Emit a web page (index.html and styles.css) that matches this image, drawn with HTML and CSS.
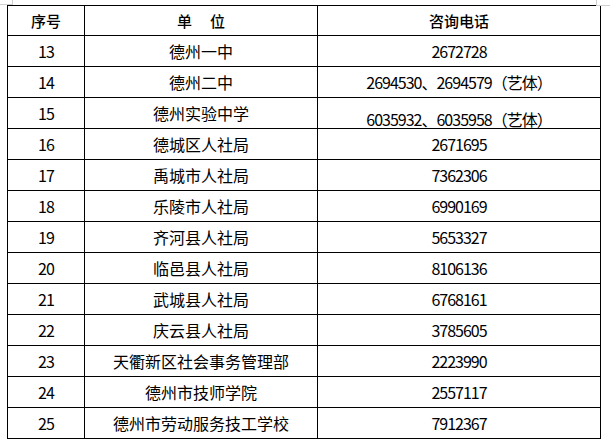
FILE: index.html
```html
<!DOCTYPE html>
<html lang="zh-CN">
<head>
<meta charset="utf-8">
<title>咨询电话</title>
<link rel="stylesheet" href="styles.css">
</head>
<body>
<div class="mark mark-tl"></div>
<div class="mark mark-tr"></div>
<table class="tbl">
  <colgroup>
    <col class="c1"><col class="c2"><col class="c3">
  </colgroup>
  <thead>
    <tr><th>序号</th><th><span class="sp">单</span>位</th><th>咨询电话</th></tr>
  </thead>
  <tbody>
    <tr><td class="num">13</td><td>德州一中</td><td class="tel">2672728</td></tr>
    <tr><td class="num">14</td><td>德州二中</td><td class="tel">2694530、2694579（艺体）</td></tr>
    <tr><td class="num">15</td><td class="up">德州实验中学</td><td class="tel low">6035932、6035958（艺体）</td></tr>
    <tr><td class="num">16</td><td>德城区人社局</td><td class="tel">2671695</td></tr>
    <tr><td class="num">17</td><td>禹城市人社局</td><td class="tel">7362306</td></tr>
    <tr><td class="num">18</td><td>乐陵市人社局</td><td class="tel">6990169</td></tr>
    <tr><td class="num">19</td><td>齐河县人社局</td><td class="tel">5653327</td></tr>
    <tr><td class="num">20</td><td>临邑县人社局</td><td class="tel">8106136</td></tr>
    <tr><td class="num">21</td><td>武城县人社局</td><td class="tel">6768161</td></tr>
    <tr><td class="num">22</td><td>庆云县人社局</td><td class="tel">3785605</td></tr>
    <tr><td class="num">23</td><td>天衢新区社会事务管理部</td><td class="tel">2223990</td></tr>
    <tr><td class="num">24</td><td>德州市技师学院</td><td class="tel">2557117</td></tr>
    <tr><td class="num">25</td><td>德州市劳动服务技工学校</td><td class="tel">7912367</td></tr>
  </tbody>
</table>
</body>
</html>
```
FILE: styles.css
```css
html, body {
  margin: 0;
  padding: 0;
  background: #ffffff;
}
body {
  position: relative;
  width: 610px;
  height: 443px;
  overflow: hidden;
  padding: 5px 0 0 7px;
  box-sizing: border-box;
  font-family: "Noto Sans CJK SC", "Liberation Sans", sans-serif;
  color: #000;
}
.tbl {
  border-collapse: collapse;
  table-layout: fixed;
  width: 593px;
}
.c1 { width: 77px; }
.c2 { width: 233px; }
.c3 { width: 283px; }
.tbl th, .tbl td {
  border: 1px solid #000;
  padding: 0;
  text-align: center;
  vertical-align: middle;
  font-size: 16px;
  line-height: 18px;
  font-weight: 400;
  white-space: nowrap;
}
.tbl thead tr { height: 30px; }
.tbl tbody tr { height: 31px; }
.tbl th {
  font-size: 15px;
  font-weight: 500;
}
.sp { margin-right: 18px; }
.num, .tel {
  letter-spacing: -1px;
}
.num { padding-right: 4px; }
.tel { padding-top: 2px; }
.up { padding-bottom: 3px; }
.tel.low {
  line-height: 16px;
  padding-top: 12px;
}
.mark {
  position: absolute;
  border-color: #cfcfcf;
  border-style: solid;
}
.mark-tl {
  left: 0;
  top: 0;
  width: 12px;
  height: 4px;
  border-width: 0 1px 1px 0;
}
.mark-tr {
  left: 596px;
  top: 0;
  width: 14px;
  height: 5px;
  border-width: 0 0 1px 1px;
}
```
